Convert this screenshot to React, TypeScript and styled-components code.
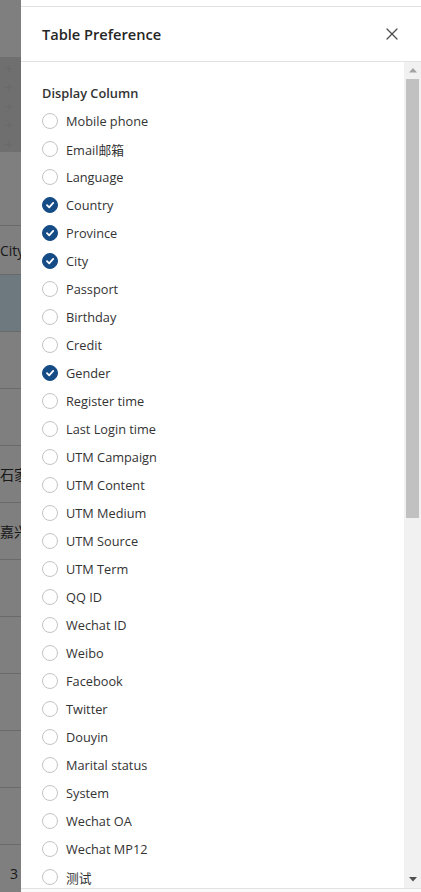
import React from 'react';
import styled, { createGlobalStyle } from 'styled-components';

const GlobalStyle = createGlobalStyle`
  html, body {
    margin: 0;
    padding: 0;
    height: 100%;
    overflow: hidden;
  }
  body {
    font-family: 'Open Sans', 'Noto Sans', 'Noto Sans CJK SC', sans-serif;
    color: #333;
  }
  * {
    box-sizing: border-box;
  }
`;

interface ColumnOption {
  label: string;
  checked?: boolean;
}

const columns: ColumnOption[] = [
  { label: 'Mobile phone' },
  { label: 'Email邮箱' },
  { label: 'Language' },
  { label: 'Country', checked: true },
  { label: 'Province', checked: true },
  { label: 'City', checked: true },
  { label: 'Passport' },
  { label: 'Birthday' },
  { label: 'Credit' },
  { label: 'Gender', checked: true },
  { label: 'Register time' },
  { label: 'Last Login time' },
  { label: 'UTM Campaign' },
  { label: 'UTM Content' },
  { label: 'UTM Medium' },
  { label: 'UTM Source' },
  { label: 'UTM Term' },
  { label: 'QQ ID' },
  { label: 'Wechat ID' },
  { label: 'Weibo' },
  { label: 'Facebook' },
  { label: 'Twitter' },
  { label: 'Douyin' },
  { label: 'Marital status' },
  { label: 'System' },
  { label: 'Wechat OA' },
  { label: 'Wechat MP12' },
  { label: '测试' },
  { label: 'Tags' },
  { label: 'Source' },
  { label: 'Channel' },
  { label: 'Store' },
];

const tableRows = [
  { text: '', selected: true },
  { text: '' },
  { text: '' },
  { text: '石家庄' },
  { text: '嘉兴' },
  { text: '' },
  { text: '' },
  { text: '' },
  { text: '' },
  { text: '' },
  { text: '3', right: true },
];

/* ---------- background page (under the mask) ---------- */

const Page = styled.div`
  height: 100vh;
  overflow: hidden;
  background: #fff;
`;

const TopBar = styled.div`
  height: 57px;
  background: #fefefe;
`;

const FilterBar = styled.div`
  height: 95px;
  background: #dedede;
  display: flex;
  flex-direction: column;
  padding: 4px 0 0 5px;
  gap: 3px;
  color: #d2d2d2;
  font-size: 14px;
  line-height: 16px;
`;

const Row = styled.div<{ $height: number; $selected?: boolean }>`
  height: ${(p) => p.$height}px;
  display: flex;
  align-items: center;
  border-bottom: 1px solid #d4d4d4;
  background: ${(p) => (p.$selected ? '#dcf0ff' : '#fff')};
`;

const Cell = styled.div<{ $right?: boolean }>`
  width: 21px;
  overflow: hidden;
  white-space: nowrap;
  font-size: 14px;
  color: #333;
  text-align: ${(p) => (p.$right ? 'right' : 'left')};
  padding-right: ${(p) => (p.$right ? '3px' : '0')};
`;

const Mask = styled.div`
  position: fixed;
  inset: 0;
  background: rgba(0, 0, 0, 0.5);
`;

/* ---------- drawer ---------- */

const Drawer = styled.aside`
  position: fixed;
  top: 0;
  right: 0;
  bottom: 0;
  width: 400px;
  background: #fff;
  display: flex;
  flex-direction: column;
`;

const TopGap = styled.div`
  height: 7px;
  border-bottom: 1px solid #e2e2e2;
  flex: none;
`;

const Header = styled.header`
  height: 55px;
  flex: none;
  display: flex;
  align-items: center;
  justify-content: space-between;
  padding: 0 22px 0 21px;
  border-bottom: 1px solid #e2e2e2;
`;

const Title = styled.h2`
  margin: 0;
  font-size: 14.6px;
  font-weight: 600;
  color: #262626;
`;

const CloseButton = styled.button`
  border: none;
  background: none;
  padding: 0;
  width: 14px;
  height: 14px;
  display: flex;
  align-items: center;
  justify-content: center;
  cursor: pointer;
  color: #4d4d4d;
`;

const BodyWrap = styled.div`
  flex: 1;
  min-height: 0;
  display: flex;
`;

const Content = styled.div`
  flex: 1;
  overflow: hidden;
  padding: 21px 0 24px 21px;
`;

const Track = styled.div`
  width: 17px;
  flex: none;
  background: #f1f1f1;
  display: flex;
  flex-direction: column;
`;

const ArrowButton = styled.div`
  height: 17px;
  flex: none;
  display: flex;
  align-items: center;
  justify-content: center;
`;

const Thumb = styled.div<{ $size: number }>`
  height: ${(p) => p.$size}px;
  margin: 0 2px;
  background: #c1c1c1;
  flex: none;
`;

const TrackRest = styled.div`
  flex: 1;
`;

const SectionTitle = styled.div`
  font-size: 12.8px;
  font-weight: 600;
  line-height: 20px;
  color: #333;
  margin-bottom: 4px;
`;

const Option = styled.label`
  height: 28px;
  display: flex;
  align-items: center;
  gap: 8px;
  font-size: 12.75px;
  color: #333;
  cursor: pointer;
`;

const Circle = styled.span<{ $checked?: boolean }>`
  width: 16px;
  height: 16px;
  border-radius: 50%;
  flex: none;
  display: flex;
  align-items: center;
  justify-content: center;
  border: 1px solid ${(p) => (p.$checked ? '#154c86' : '#c4c4c4')};
  background: ${(p) => (p.$checked ? '#154c86' : '#fff')};
`;

const Footer = styled.div`
  height: 4px;
  flex: none;
  border-top: 1px solid #e2e2e2;
  background: #fafafa;
`;

const CheckMark = () => (
  <svg width="10" height="10" viewBox="0 0 10 10">
    <path
      d="M2 5.2 L4.2 7.3 L8.2 2.9"
      fill="none"
      stroke="#fff"
      strokeWidth="1.8"
      strokeLinecap="round"
      strokeLinejoin="round"
    />
  </svg>
);

const CloseIcon = () => (
  <svg width="12" height="12" viewBox="0 0 12 12">
    <path
      d="M1 1 L11 11 M11 1 L1 11"
      stroke="currentColor"
      strokeWidth="1.3"
      strokeLinecap="round"
    />
  </svg>
);

const Arrow = ({ down }: { down?: boolean }) => (
  <svg width="8" height="5" viewBox="0 0 8 5">
    <path
      d={down ? 'M0 0 L8 0 L4 4.5 Z' : 'M0 4.5 L8 4.5 L4 0 Z'}
      fill={down ? '#505050' : '#a3a3a3'}
    />
  </svg>
);

export default function App() {
  return (
    <>
      <GlobalStyle />
      <Page>
        <TopBar />
        <FilterBar>
          {['+', '+', '+', '+', '+'].map((p, i) => (
            <span key={i}>{p}</span>
          ))}
        </FilterBar>
        <Row $height={74} />
        <Row $height={49}>
          <Cell>City</Cell>
        </Row>
        {tableRows.map((r, i) => (
          <Row key={i} $height={57} $selected={r.selected}>
            <Cell $right={r.right}>{r.text}</Cell>
          </Row>
        ))}
      </Page>
      <Mask />
      <Drawer>
        <TopGap />
        <Header>
          <Title>Table Preference</Title>
          <CloseButton aria-label="Close">
            <CloseIcon />
          </CloseButton>
        </Header>
        <BodyWrap>
          <Content>
            <SectionTitle>Display Column</SectionTitle>
            {columns.map((opt) => (
              <Option key={opt.label}>
                <Circle $checked={opt.checked}>{opt.checked && <CheckMark />}</Circle>
                {opt.label}
              </Option>
            ))}
          </Content>
          <Track>
            <ArrowButton>
              <Arrow />
            </ArrowButton>
            <Thumb $size={439} />
            <TrackRest />
            <ArrowButton>
              <Arrow down />
            </ArrowButton>
          </Track>
        </BodyWrap>
        <Footer />
      </Drawer>
    </>
  );
}
